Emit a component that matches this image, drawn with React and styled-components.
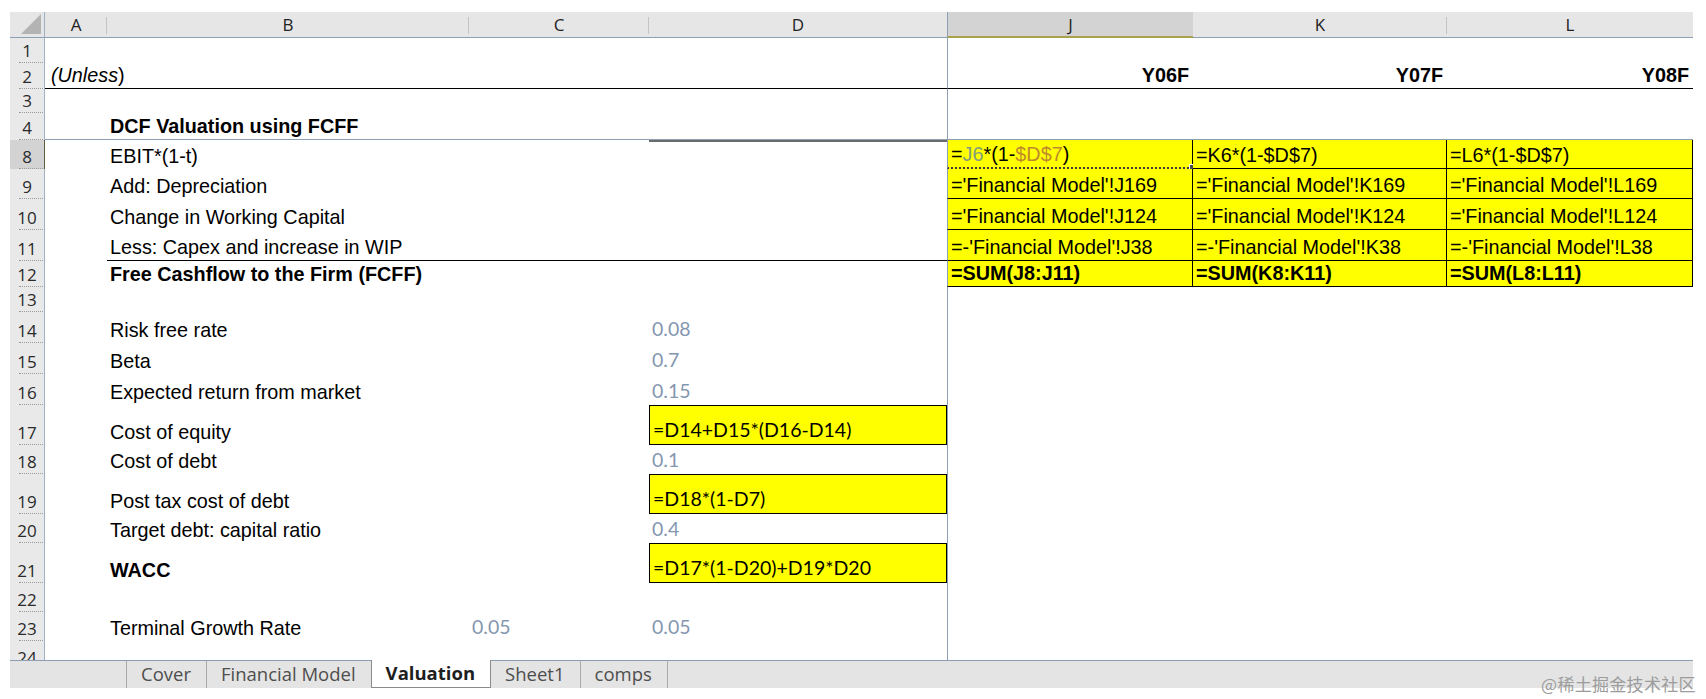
import React from "react";
import styled, { createGlobalStyle, css } from "styled-components";

const COLS = "35px 62px 362px 180px 298px 246px 254px 246px";
const PANE = "#8c9fb5";
const LETTERS = ["A", "B", "C", "D", "J", "K", "L"];

const GlobalStyle = createGlobalStyle`
  *, *::before, *::after { box-sizing: border-box; }
  html, body { margin: 0; padding: 0; background: #fff; }
  body { font-family: "Liberation Sans", Arial, sans-serif; }
`;

const Page = styled.div`
  position: relative;
  width: 1706px;
  height: 699px;
  padding: 12px 0 0 10px;
  overflow: hidden;
`;

const Workbook = styled.div`
  width: 1683px;
`;

const Grid = styled.div`
  display: flex;
  flex-direction: column;
  height: 648px;
  overflow: hidden;
`;

const Row = styled.div`
  display: grid;
  grid-template-columns: ${COLS};
  height: ${(p) => p.$h}px;
  flex: none;
`;

const Corner = styled.div`
  position: relative;
  background: #e6e6e6;
  border-bottom: 1px solid ${PANE};
  border-right: 1px solid #9fb1c5;

  svg {
    position: absolute;
    right: 3px;
    bottom: 3px;
  }
`;

const ColHead = styled.div`
  position: relative;
  display: flex;
  align-items: center;
  justify-content: center;
  font-family: "Open Sans", sans-serif;
  font-size: 17px;
  color: #222;
  background: ${(p) => (p.$active ? "#d3d3d3" : "#e6e6e6")};
  border-bottom: ${(p) => (p.$active ? "2px solid #a8a24c" : `1px solid ${PANE}`)};
  ${(p) => p.$pane && css`border-left: 1px solid ${PANE};`}

  &::after {
    content: "";
    position: absolute;
    right: 0;
    top: 5px;
    bottom: 3px;
    border-right: 1px solid #c4c4c4;
    display: ${(p) => (p.$plain ? "none" : "block")};
  }
`;

const RowHead = styled.div`
  position: relative;
  display: flex;
  align-items: flex-end;
  justify-content: center;
  padding-bottom: 2px;
  font-family: "Open Sans", sans-serif;
  font-size: 17px;
  line-height: 20px;
  color: #2a2a2a;
  background: ${(p) => (p.$active ? "#d3d3d3" : "#e9e9e9")};
  border-right: 1px solid ${(p) => (p.$active ? "#5e5e3c" : "#9fb1c5")};

  &::after {
    content: "";
    position: absolute;
    left: 9px;
    right: 1px;
    bottom: 0;
    border-bottom: 1px dotted #9a9a9a;
  }
`;

const Cell = styled.div`
  position: relative;
  display: flex;
  align-items: flex-end;
  justify-content: ${(p) => (p.$right ? "flex-end" : "flex-start")};
  padding: 0 4px 2px ${(p) => (p.$indent ? 6 : 3)}px;
  white-space: nowrap;
  font-size: 19.8px;
  line-height: 22px;
  color: #000;
  font-weight: ${(p) => (p.$bold ? 700 : 400)};
  ${(p) => p.$pane && css`border-left: 1px solid ${PANE};`}
  ${(p) => p.$split && css`border-bottom: 1px solid ${PANE};`}
  ${(p) => p.$under && css`border-bottom: 1px solid #000;`}
  ${(p) =>
    p.$grid &&
    css`
      background: #ffff00;
      border-right: 1px solid #000;
      border-bottom: 1px solid #000;
    `}
  ${(p) =>
    p.$box &&
    css`
      background: #ffff00;
      border: 1px solid #000;
    `}
  ${(p) =>
    p.$calc &&
    css`
      font-family: Lato, "Open Sans", sans-serif;
      font-size: 19.5px;
      padding-bottom: 3px;
    `}
  ${(p) => p.$muted && css`color: #8497b0;`}
  ${(p) => p.$shade && css`box-shadow: inset 0 2px 0 #6b6b6b;`}
  ${(p) =>
    p.$selected &&
    css`
      border-bottom: 2px dotted #3c3c3c;
      &::after {
        content: "";
        position: absolute;
        right: -4px;
        bottom: -4px;
        width: 7px;
        height: 7px;
        background: #4a4a4a;
        border: 1px solid #fff;
      }
    `}
`;

const Italic = styled.span`
  font-style: italic;
`;

const Ref = styled.span`
  color: ${(p) => p.$tone};
`;

const TabBar = styled.div`
  display: flex;
  align-items: stretch;
  height: 28px;
  padding-left: 116px;
  background: #e4e4e4;
  border-top: 1px solid ${PANE};
`;

const Tabs = styled.div`
  display: flex;
  border-left: 1px solid #a9a9a9;
`;

const Tab = styled.div`
  display: flex;
  align-items: center;
  padding: 0 15px 2px 14px;
  font-family: "Open Sans", sans-serif;
  font-size: 18.5px;
  color: #4e4e4e;
  border-right: 1px solid #a9a9a9;
  ${(p) =>
    p.$active &&
    css`
      margin: -1px 0 0 -1px;
      background: #fff;
      color: #1e1e1e;
      font-weight: 700;
      border-left: 1px solid #8a8a8a;
      border-right: 1px solid #8a8a8a;
      border-bottom: 1px solid #8a8a8a;
    `}
`;

const Watermark = styled.div`
  position: absolute;
  left: 1541px;
  top: 671px;
  font-family: "Noto Sans CJK SC", sans-serif;
  font-size: 17px;
  color: #9c9c9c;
  letter-spacing: 0.3px;
`;

const j8 = (
  <>
    =<Ref $tone="#7f9c7f">J6</Ref>*(1-<Ref $tone="#c08a2c">$D$7</Ref>)
  </>
);

const yellow = (v, extra = {}) => ({ v, grid: true, ...extra });

const rows = [
  { n: 1, h: 25 },
  {
    n: 2,
    h: 26,
    under: "ABCDJKL",
    cells: {
      A: { v: <><Italic>(Unless</Italic>)</>, indent: true },
      J: { v: "Y06F", bold: true, right: true },
      K: { v: "Y07F", bold: true, right: true },
      L: { v: "Y08F", bold: true, right: true },
    },
  },
  { n: 3, h: 24 },
  { n: 4, h: 27, split: true, cells: { B: { v: "DCF Valuation using FCFF", bold: true } } },
  {
    n: 8,
    h: 29,
    active: true,
    cells: {
      B: { v: "EBIT*(1-t)" },
      D: { shade: true },
      J: yellow(j8, { selected: true }),
      K: yellow("=K6*(1-$D$7)"),
      L: yellow("=L6*(1-$D$7)"),
    },
  },
  {
    n: 9,
    h: 30,
    cells: {
      B: { v: "Add: Depreciation" },
      J: yellow("='Financial Model'!J169"),
      K: yellow("='Financial Model'!K169"),
      L: yellow("='Financial Model'!L169"),
    },
  },
  {
    n: 10,
    h: 31,
    cells: {
      B: { v: "Change in Working Capital" },
      J: yellow("='Financial Model'!J124"),
      K: yellow("='Financial Model'!K124"),
      L: yellow("='Financial Model'!L124"),
    },
  },
  {
    n: 11,
    h: 31,
    under: "BCD",
    cells: {
      B: { v: "Less: Capex and increase in WIP" },
      J: yellow("=-'Financial Model'!J38"),
      K: yellow("=-'Financial Model'!K38"),
      L: yellow("=-'Financial Model'!L38"),
    },
  },
  {
    n: 12,
    h: 26,
    cells: {
      B: { v: "Free Cashflow to the Firm (FCFF)", bold: true },
      J: yellow("=SUM(J8:J11)", { bold: true }),
      K: yellow("=SUM(K8:K11)", { bold: true }),
      L: yellow("=SUM(L8:L11)", { bold: true }),
    },
  },
  { n: 13, h: 25 },
  { n: 14, h: 31, cells: { B: { v: "Risk free rate" }, D: { v: "0.08", calc: true, muted: true } } },
  { n: 15, h: 31, cells: { B: { v: "Beta" }, D: { v: "0.7", calc: true, muted: true } } },
  {
    n: 16,
    h: 31,
    cells: { B: { v: "Expected return from market" }, D: { v: "0.15", calc: true, muted: true } },
  },
  {
    n: 17,
    h: 40,
    cells: { B: { v: "Cost of equity" }, D: { v: "=D14+D15*(D16-D14)", calc: true, box: true } },
  },
  { n: 18, h: 29, cells: { B: { v: "Cost of debt" }, D: { v: "0.1", calc: true, muted: true } } },
  {
    n: 19,
    h: 40,
    cells: { B: { v: "Post tax cost of debt" }, D: { v: "=D18*(1-D7)", calc: true, box: true } },
  },
  {
    n: 20,
    h: 29,
    cells: { B: { v: "Target debt: capital ratio" }, D: { v: "0.4", calc: true, muted: true } },
  },
  {
    n: 21,
    h: 40,
    cells: { B: { v: "WACC", bold: true }, D: { v: "=D17*(1-D20)+D19*D20", calc: true, box: true } },
  },
  { n: 22, h: 29 },
  {
    n: 23,
    h: 29,
    cells: {
      B: { v: "Terminal Growth Rate" },
      C: { v: "0.05", calc: true, muted: true },
      D: { v: "0.05", calc: true, muted: true },
    },
  },
  { n: 24, h: 29 },
];

const SheetRow = ({ row }) => {
  const cells = row.cells || {};
  const under = row.under || "";
  return (
    <Row $h={row.h}>
      <RowHead $active={row.active}>{row.n}</RowHead>
      {LETTERS.map((col) => {
        const c = cells[col] || {};
        return (
          <Cell
            key={col}
            $pane={col === "J"}
            $split={row.split}
            $under={under.includes(col)}
            $bold={c.bold}
            $right={c.right}
            $indent={c.indent}
            $grid={c.grid}
            $box={c.box}
            $calc={c.calc}
            $muted={c.muted}
            $shade={c.shade}
            $selected={c.selected}
          >
            {c.v}
          </Cell>
        );
      })}
    </Row>
  );
};

const sheets = ["Cover", "Financial Model", "Valuation", "Sheet1", "comps"];

export default function App() {
  return (
    <>
      <GlobalStyle />
      <Page>
        <Workbook>
          <Grid>
            <Row $h={26}>
              <Corner>
                <svg width="20" height="20" viewBox="0 0 20 20">
                  <polygon points="0,20 20,0 20,20" fill="#b3b3b3" />
                </svg>
              </Corner>
              {LETTERS.map((col) => (
                <ColHead
                  key={col}
                  $pane={col === "J"}
                  $active={col === "J"}
                  $plain={col === "D" || col === "J" || col === "L"}
                >
                  {col}
                </ColHead>
              ))}
            </Row>
            {rows.map((row) => (
              <SheetRow key={row.n} row={row} />
            ))}
          </Grid>
          <TabBar>
            <Tabs>
              {sheets.map((name) => (
                <Tab key={name} $active={name === "Valuation"}>
                  {name}
                </Tab>
              ))}
            </Tabs>
          </TabBar>
        </Workbook>
        <Watermark>@稀土掘金技术社区</Watermark>
      </Page>
    </>
  );
}
